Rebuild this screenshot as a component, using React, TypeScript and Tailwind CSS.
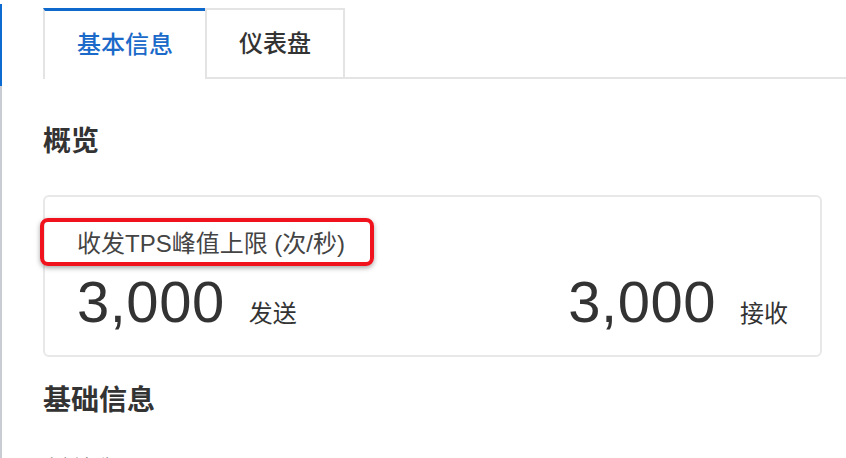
import React from "react";

const font = { fontFamily: '"Liberation Sans", "Noto Sans CJK SC", sans-serif' };

function Stat({ value, unit }: { value: string; unit: string }) {
  return (
    <div className="flex items-baseline">
      <span className="text-[58px] leading-[58px] text-[#333] tracking-[0.5px]">{value}</span>
      <span className="ml-[24px] text-[24px] leading-[32px] text-[#333]">{unit}</span>
    </div>
  );
}

export default function App() {
  return (
    <div className="flex w-[846px] h-[458px] overflow-hidden bg-white" style={font}>
      <div className="flex flex-col w-[2px] shrink-0">
        <div className="h-[4px] bg-white" />
        <div className="h-[82px] bg-[#0d6ad0]" />
        <div className="flex-1 bg-[#c9ccd3]" />
      </div>
      <div className="flex-1 flex flex-col pl-[41px] pt-[8px]">
        <div className="flex">
          <div className="h-[71px] px-[32px] flex items-center border-l-2 border-l-[#e4e4e4] border-t-[3px] border-t-[#0f68cc] text-[24px] font-medium text-[#1b6ac9]">
            基本信息
          </div>
          <div className="h-[71px] px-[32px] flex items-center border-2 border-[#e4e4e4] text-[24px] font-medium text-[#333]">
            仪表盘
          </div>
          <div className="flex-1 border-b-2 border-[#e4e4e4]" />
        </div>
        <h2 className="mt-[45px] text-[28px] leading-[36px] font-bold text-[#333]">概览</h2>
        <div className="relative mt-[35px] w-[779px] border-2 border-[#e8e8e8] rounded-[6px] px-[32px] pt-[31px] pb-[24px]">
          <div className="text-[24px] leading-[32px] text-[#444]">收发TPS峰值上限 (次/秒)</div>
          <div className="mt-[13px] flex justify-between">
            <Stat value="3,000" unit="发送" />
            <Stat value="3,000" unit="接收" />
          </div>
          <div className="absolute left-[-5px] top-[21px] w-[334px] h-[48px] border-4 border-[#f0131e] rounded-[8px] shadow-[0_2px_5px_rgba(0,0,0,0.35)]" />
        </div>
        <h2 className="mt-[26px] text-[28px] leading-[36px] font-bold text-[#333]">基础信息</h2>
        <div className="mt-[36px] text-[18px] leading-[24px] text-[#666]">实例名称</div>
      </div>
    </div>
  );
}
